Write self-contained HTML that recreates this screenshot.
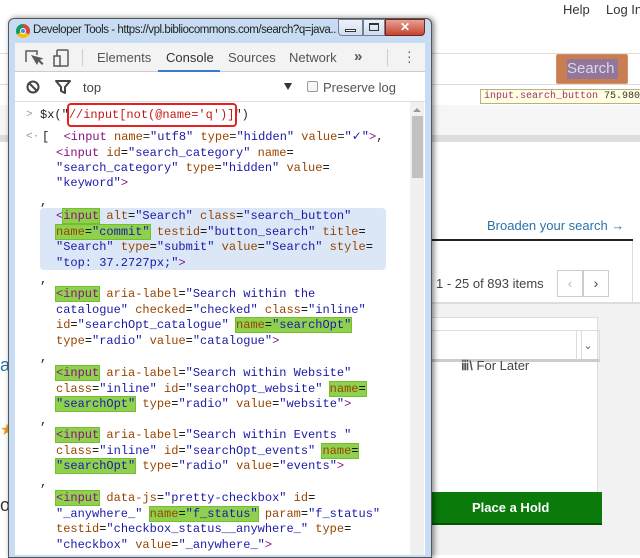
<!DOCTYPE html>
<html><head><meta charset="utf-8"><style>
*{margin:0;padding:0;box-sizing:border-box}
body{width:640px;height:555px;overflow:hidden;position:relative;background:#fff;font-family:"Liberation Sans",sans-serif}
.a{position:absolute;white-space:nowrap}
.m{font-family:"Liberation Mono",monospace;font-size:12px;white-space:pre;line-height:15px}
.t{color:#881280}.n{color:#994500}.v{color:#1a1aa6}.g{color:#888}
.h{background:#8fd14f;outline:1px solid #74c02c}
</style></head><body>
<!-- background page -->
<div class="a" style="left:563px;top:2px;font-size:13px;color:#333">Help</div>
<div class="a" style="left:606px;top:2px;font-size:13px;color:#333">Log In</div>
<div class="a" style="left:0;top:53px;width:640px;height:32px;border-top:1px solid #ddd;border-bottom:1px solid #ddd"></div>
<div class="a" style="left:556px;top:54px;width:72px;height:30px;background:#c97d52;border:1px solid #d99060;border-radius:2px"></div>
<div class="a" style="left:567px;top:59px;width:51px;height:20px;background:#93779a;color:#d8d8ee;font-size:15px;line-height:20px">Search</div>
<div class="a m" style="left:480px;top:89px;height:15px;border:1px solid #b8b08a;background:#ffffe0;font-size:10px;line-height:13px;padding-left:3px;width:170px;color:#a0307a">input.search_button <span style="color:#333">75.9801px</span></div>
<div class="a" style="left:0;top:105px;width:640px;height:30px;background:#f6f6f6"></div>
<div class="a" style="left:0;top:135px;width:640px;height:7px;background:#ddd"></div>
<div class="a" style="left:487px;top:218px;font-size:13px;color:#2b72a8">Broaden your search →</div>
<div class="a" style="left:420px;top:239px;width:213px;height:2px;background:#222"></div>
<div class="a" style="left:420px;top:241px;width:213px;height:62px;border-right:1px solid #ddd"></div>
<div class="a" style="left:436px;top:276px;font-size:13px;color:#444">1 - 25 of 893 items</div>
<div class="a" style="left:557px;top:270px;width:26px;height:27px;border:1px solid #ccc;color:#bbb;text-align:center;line-height:25px;font-size:14px">‹</div>
<div class="a" style="left:583px;top:270px;width:26px;height:27px;border:1px solid #ccc;color:#444;text-align:center;line-height:25px;font-size:14px">›</div>
<div class="a" style="left:420px;top:302px;width:220px;height:253px;background:#f2f2f2;border-top:2px solid #ddd"></div>
<div class="a" style="left:420px;top:317px;width:178px;height:200px;background:#fff;border:1px solid #ddd"></div>
<div class="a" style="left:420px;top:330px;width:162px;height:32px;border:1px solid #ddd;border-bottom:3px solid #ccc;background:#fff"></div>
<div class="a" style="left:576px;top:330px;width:24px;height:32px;border:1px solid #ddd;border-bottom:3px solid #ccc;color:#666;font-size:11px;text-align:center;line-height:30px">⌄</div>
<div class="a" style="left:461px;top:358px;font-size:13px;color:#444"><b style="color:#555">ⅲ\</b> For Later</div>
<div class="a" style="left:420px;top:492px;width:182px;height:33px;background:#0a7a0a;border-bottom:2px solid #055505;color:#fff;font-size:13px;font-weight:bold;line-height:31px;padding-left:52px">Place a Hold</div>
<div class="a" style="left:0;top:355px;font-size:18px;color:#2b72a8">a</div>
<div class="a" style="left:0;top:420px;font-size:16px;color:#e8a020">★</div>
<div class="a" style="left:0;top:495px;font-size:18px;color:#333">o</div>
<!-- window -->
<div class="a" style="left:8px;top:18px;width:424px;height:540px;background:#c7dbf2;border:1px solid #555;border-radius:6px 6px 0 0;box-shadow:2px 0 6px rgba(0,0,0,.5)"></div>
<div class="a" style="left:16px;top:24px;width:14px;height:14px;border-radius:50%;background:conic-gradient(#db4437 0 120deg,#f4c20d 120deg 240deg,#0f9d58 240deg);"></div>
<div class="a" style="left:20px;top:28px;width:6px;height:6px;border-radius:50%;background:#4285f4;border:1px solid #fff"></div>
<div class="a" style="left:33px;top:24px;width:304px;overflow:hidden;font-size:11.5px;color:#222;letter-spacing:-0.45px">Developer Tools - https://vpl.bibliocommons.com/search?q=java...</div>
<div class="a" style="left:338px;top:19px;width:25px;height:17px;background:linear-gradient(#eef3fa,#cfdcec);border:1px solid #6f7f94;border-radius:0 0 0 4px"></div>
<div class="a" style="left:345px;top:29px;width:11px;height:3px;border:1px solid #333;background:#fff"></div>
<div class="a" style="left:363px;top:19px;width:22px;height:17px;background:linear-gradient(#eef3fa,#cfdcec);border:1px solid #6f7f94"></div>
<div class="a" style="left:369px;top:23px;width:10px;height:8px;border:1px solid #333;border-top-width:2px"></div>
<div class="a" style="left:385px;top:19px;width:40px;height:17px;background:linear-gradient(#e8a093,#c7432f);border:1px solid #6a2a20;border-radius:0 0 4px 0;color:#fff;font-size:12px;font-weight:bold;text-align:center;line-height:15px">✕</div>
<!-- devtools content -->
<div class="a" style="left:15px;top:43px;width:410px;height:512px;background:#fff"></div>
<div class="a" style="left:15px;top:43px;width:410px;height:29px;background:#f3f3f3;border-bottom:1px solid #ccc"></div>
<svg class="a" style="left:24px;top:48px" width="50" height="20" viewBox="0 0 50 20"><path d="M2 14V3h11v4" fill="none" stroke="#5a5a5a" stroke-width="1.5"/><path d="M7 7l6 10 1.5-3.5 3.5 3.5 1.5-1.5-3.5-3.5 3.5-1.5z" fill="#5a5a5a"/><rect x="33" y="2" width="11" height="16" rx="1" fill="none" stroke="#5a5a5a" stroke-width="1.5"/><rect x="30" y="8" width="6" height="10" fill="#f3f3f3" stroke="#5a5a5a" stroke-width="1.5"/></svg>
<div class="a" style="left:82px;top:49px;width:1px;height:17px;background:#ccc"></div>
<div class="a" style="left:97px;top:50px;font-size:13px;color:#555">Elements</div>
<div class="a" style="left:166px;top:50px;font-size:13px;color:#333">Console</div>
<div class="a" style="left:158px;top:70px;width:62px;height:2px;background:#3879d9"></div>
<div class="a" style="left:228px;top:50px;font-size:13px;color:#555">Sources</div>
<div class="a" style="left:289px;top:50px;font-size:13px;color:#555">Network</div>
<div class="a" style="left:354px;top:48px;font-size:15px;color:#555;font-weight:bold">»</div>
<div class="a" style="left:387px;top:49px;width:1px;height:17px;background:#ccc"></div>
<div class="a" style="left:407px;top:49px;font-size:14px;color:#555;line-height:5px">·<br>·<br>·</div>
<div class="a" style="left:15px;top:101px;width:410px;height:1px;background:#ddd"></div>
<svg class="a" style="left:26px;top:80px" width="14" height="14"><circle cx="7" cy="7" r="5.5" fill="none" stroke="#444" stroke-width="2"/><path d="M3 3l8 8" stroke="#444" stroke-width="2"/></svg>
<svg class="a" style="left:55px;top:80px" width="16" height="14"><path d="M1 1h14l-5 6v6l-4-2V7z" fill="none" stroke="#444" stroke-width="2" stroke-linejoin="round"/></svg>
<div class="a" style="left:83px;top:80px;font-size:13px;color:#444">top</div>
<div class="a" style="left:284px;top:83px;width:0;height:0;border-left:4px solid transparent;border-right:4px solid transparent;border-top:7px solid #333"></div>
<div class="a" style="left:307px;top:81px;width:11px;height:11px;border:1px solid #999;border-radius:2px;background:#f6f6f6"></div>
<div class="a" style="left:323px;top:80px;font-size:13px;color:#555">Preserve log</div>
<!-- scrollbar -->
<div class="a" style="left:410px;top:102px;width:14px;height:453px;background:#f0f0f0"></div>
<div class="a" style="left:413px;top:108px;width:0;height:0;border-left:4px solid transparent;border-right:4px solid transparent;border-bottom:4px solid #999"></div>
<div class="a" style="left:412px;top:116px;width:11px;height:62px;background:#c1c1c1"></div>
<!-- console -->
<div class="a" style="left:40px;top:208px;width:346px;height:62px;background:#dbe6f7;border-radius:4px"></div>
<div class="a m" style="left:26px;top:108px;color:#999;font-size:11px">&gt;</div>
<div class="a m" style="left:40px;top:108px;color:#222">$x("<span style="color:#c41a16">//input[not(@name='q')]</span>")</div>
<div class="a" style="left:67px;top:103px;width:170px;height:24px;border:2px solid #e52222;border-radius:4px"></div>
<div class="a m" style="left:26px;top:130px;color:#999;font-size:11px">&lt;·</div>
<div class="a m" style="left:42px;top:130px;color:#222">[  <span class="t">&lt;input</span> <span class="n">name</span>=<span class="v">"utf8"</span> <span class="n">type</span>=<span class="v">"hidden"</span> <span class="n">value</span>=<span class="v">"✓"</span><span class="t">&gt;</span>,</div>
<div class="a m" style="left:56px;top:146px"><span class="t">&lt;input</span> <span class="n">id</span>=<span class="v">"search_category"</span> <span class="n">name</span>=
<span class="v">"search_category"</span> <span class="n">type</span>=<span class="v">"hidden"</span> <span class="n">value</span>=
<span class="v">"keyword"</span><span class="t">&gt;</span></div>
<div class="a m" style="left:40px;top:195px;color:#222">,</div>
<div class="a m" style="left:56px;top:209px;line-height:15.5px"><span class="t">&lt;<span class="h">input</span></span> <span class="n">alt</span>=<span class="v">"Search"</span> <span class="n">class</span>=<span class="v">"search_button"</span>
<span class="h"><span class="n">name</span>=<span class="v">"commit"</span></span> <span class="n">testid</span>=<span class="v">"button_search"</span> <span class="n">title</span>=
<span class="v">"Search"</span> <span class="n">type</span>=<span class="v">"submit"</span> <span class="n">value</span>=<span class="v">"Search"</span> <span class="n">style</span>=
<span class="v">"top: 37.2727px;"</span><span class="t">&gt;</span></div>
<div class="a m" style="left:40px;top:273px;color:#222">,</div>
<div class="a m" style="left:56px;top:287px;line-height:15.5px"><span class="h"><span class="t">&lt;input</span></span> <span class="n">aria-label</span>=<span class="v">"Search within the</span>
<span class="v">catalogue"</span> <span class="n">checked</span>=<span class="v">"checked"</span> <span class="n">class</span>=<span class="v">"inline"</span>
<span class="n">id</span>=<span class="v">"searchOpt_catalogue"</span> <span class="h"><span class="n">name</span>=<span class="v">"searchOpt"</span></span>
<span class="n">type</span>=<span class="v">"radio"</span> <span class="n">value</span>=<span class="v">"catalogue"</span><span class="t">&gt;</span></div>
<div class="a m" style="left:40px;top:351px;color:#222">,</div>
<div class="a m" style="left:56px;top:366px;line-height:15.5px"><span class="h"><span class="t">&lt;input</span></span> <span class="n">aria-label</span>=<span class="v">"Search within Website"</span>
<span class="n">class</span>=<span class="v">"inline"</span> <span class="n">id</span>=<span class="v">"searchOpt_website"</span> <span class="h"><span class="n">name</span>=</span>
<span class="h"><span class="v">"searchOpt"</span></span> <span class="n">type</span>=<span class="v">"radio"</span> <span class="n">value</span>=<span class="v">"website"</span><span class="t">&gt;</span></div>
<div class="a m" style="left:40px;top:414px;color:#222">,</div>
<div class="a m" style="left:56px;top:428px;line-height:15.5px"><span class="h"><span class="t">&lt;input</span></span> <span class="n">aria-label</span>=<span class="v">"Search within Events "</span>
<span class="n">class</span>=<span class="v">"inline"</span> <span class="n">id</span>=<span class="v">"searchOpt_events"</span> <span class="h"><span class="n">name</span>=</span>
<span class="h"><span class="v">"searchOpt"</span></span> <span class="n">type</span>=<span class="v">"radio"</span> <span class="n">value</span>=<span class="v">"events"</span><span class="t">&gt;</span></div>
<div class="a m" style="left:40px;top:476px;color:#222">,</div>
<div class="a m" style="left:56px;top:491px;line-height:15.5px"><span class="h"><span class="t">&lt;input</span></span> <span class="n">data-js</span>=<span class="v">"pretty-checkbox"</span> <span class="n">id</span>=
<span class="v">"_anywhere_"</span> <span class="h"><span class="n">name</span>=<span class="v">"f_status"</span></span> <span class="n">param</span>=<span class="v">"f_status"</span>
<span class="n">testid</span>=<span class="v">"checkbox_status__anywhere_"</span> <span class="n">type</span>=
<span class="v">"checkbox"</span> <span class="n">value</span>=<span class="v">"_anywhere_"</span><span class="t">&gt;</span></div>
</body></html>
